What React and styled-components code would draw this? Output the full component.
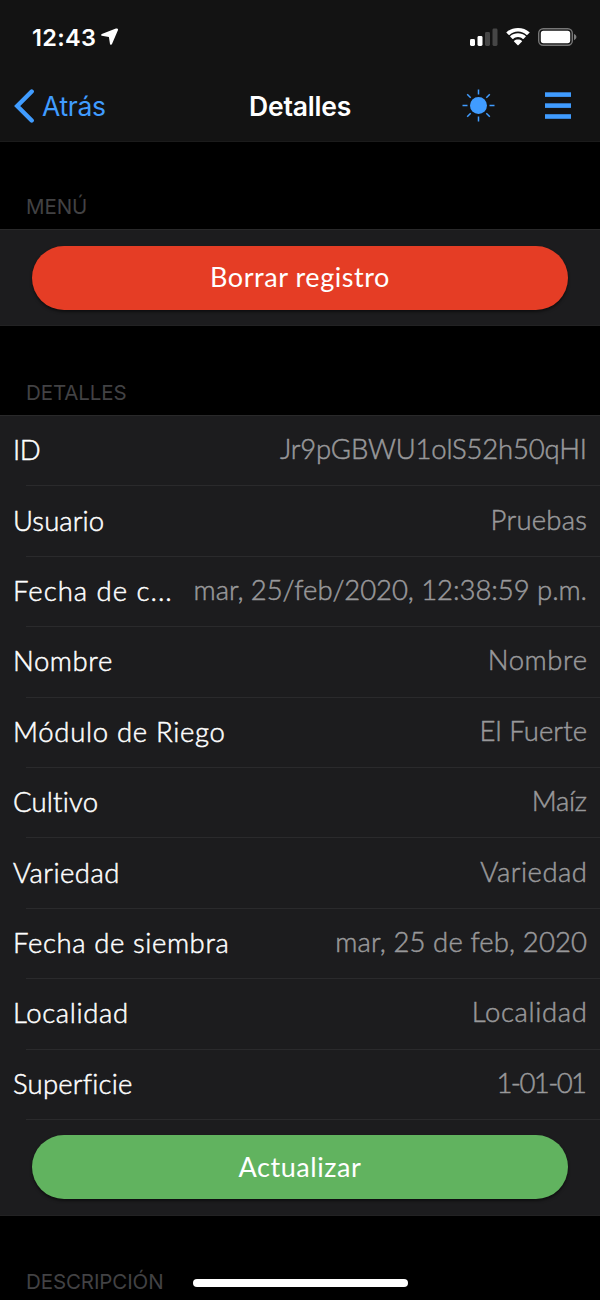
import React from 'react';
import styled, { createGlobalStyle } from 'styled-components';


const blue = '#409cff';
const sfFont = 'Inter, "Liberation Sans", sans-serif';

const GlobalStyle = createGlobalStyle`
    * {
        box-sizing: border-box;
    }
    body {
        margin: 0;
        background: #000;
        font-family: Lato, "Open Sans", sans-serif;
    }
`;

const Screen = styled.div`
    position: relative;
    width: 600px;
    height: 1300px;
    overflow: hidden;
    background: #000;
`;

const Header = styled.header`
    height: 142px;
    background: #131313;
    border-bottom: 1px solid #1b1b1b;
    font-family: ${sfFont};
`;

const StatusBar = styled.div`
    display: flex;
    align-items: center;
    justify-content: space-between;
    height: 74px;
    padding: 0 23px 0 32px;
    color: #fff;
`;

const Clock = styled.div`
    display: flex;
    align-items: center;
    gap: 5px;
    font-size: 23.5px;
    font-weight: 600;
    letter-spacing: 0.3px;
`;

const StatusIcons = styled.div`
    display: flex;
    align-items: center;
    gap: 8px;
    svg {
        display: block;
    }
`;

const NavBar = styled.nav`
    display: grid;
    grid-template-columns: 200px 200px 200px;
    align-items: center;
    height: 64px;
`;

const BackButton = styled.button`
    display: flex;
    align-items: center;
    gap: 7px;
    padding: 0 0 0 14px;
    border: 0;
    background: none;
    color: ${blue};
    font: 400 26.5px ${sfFont};
    letter-spacing: -0.3px;
`;

const Title = styled.h1`
    margin: 0;
    color: #fff;
    font-size: 26.5px;
    font-weight: 600;
    text-align: center;
    letter-spacing: -0.2px;
`;

const NavActions = styled.div`
    display: flex;
    align-items: center;
    justify-content: flex-end;
    gap: 50px;
    padding: 0 28px 2px 0;
    color: ${blue};
    svg {
        display: block;
    }
`;

const SectionTitle = styled.h2`
    display: flex;
    align-items: flex-end;
    height: ${props => props.$height}px;
    margin: 0;
    padding: 0 26px 10px;
    color: #424244;
    font-family: ${sfFont};
    font-size: 20.5px;
    font-weight: 400;
    line-height: 25px;
    letter-spacing: -0.1px;
`;

const Panel = styled.section`
    background: #1c1c1e;
    border-top: 1px solid #29292a;
    border-bottom: 1px solid #222223;
`;

const ButtonRow = styled.div`
    height: 95px;
    padding: 15.5px 32px 0;
`;

const PillButton = styled.button`
    display: block;
    width: 100%;
    height: 64px;
    padding: 0 0 2px;
    border: 0;
    border-radius: 32px;
    background: ${props => props.$color};
    box-shadow: 0 2px 3px rgba(0, 0, 0, 0.5);
    color: #fff;
    font: 400 27px Lato, sans-serif;
    letter-spacing: 0.55px;
`;

const Row = styled.div`
    display: flex;
    align-items: center;
    justify-content: space-between;
    height: 70.4px;
    padding: 0 13px 3px;
    background: linear-gradient(#2a2a2c, #2a2a2c) 26px 100% / 100% 1px no-repeat;
    font-size: 27.5px;
    font-weight: 300;
    white-space: nowrap;
    -webkit-text-stroke: 0.5px currentColor;
`;

const Label = styled.span`
    color: #fff;
    letter-spacing: ${props => props.$tracking}px;
`;

const Value = styled.span`
    margin-right: ${props => -props.$tracking}px;
    padding-bottom: 2px;
    color: #98989a;
    letter-spacing: ${props => props.$tracking}px;
`;

const HomeIndicator = styled.div`
    position: absolute;
    left: 193px;
    bottom: 13px;
    width: 215px;
    height: 8.5px;
    border-radius: 5px;
    background: #fff;
`;


// tracking: letter spacing of the label and of the value
const rows = [
    { label: 'ID', value: 'Jr9pGBWU1olS52h50qHI', tracking: [-0.3, -0.2] },
    { label: 'Usuario', value: 'Pruebas', tracking: [0.1, 0.25] },
    { label: 'Fecha de c...', value: 'mar, 25/feb/2020, 12:38:59 p.m.', tracking: [1, -0.06] },
    { label: 'Nombre', value: 'Nombre', tracking: [0.6, 0.6] },
    { label: 'Módulo de Riego', value: 'El Fuerte', tracking: [0.7, 0.1] },
    { label: 'Cultivo', value: 'Maíz', tracking: [0.2, -0.3] },
    { label: 'Variedad', value: 'Variedad', tracking: [0.45, 0.5] },
    { label: 'Fecha de siembra', value: 'mar, 25 de feb, 2020', tracking: [0.6, 0.12] },
    { label: 'Localidad', value: 'Localidad', tracking: [0.65, 0.65] },
    { label: 'Superficie', value: '1-01-01', tracking: [0.2, -1.6] },
];

const LocationArrow = () => (
    <svg width="18" height="18" viewBox="0 0 18 18" fill="currentColor">
        <path d="M14.9.6.8 6c-.9.4-.9 1.6 0 1.8L7.9 9l1.100 6.900c.2 1 1.600 1.200 2 .2L17 1.900c.3-.9-.9-1.700-2.100-1.300z" />
    </svg>
);

const Signal = () => (
    <svg width="28" height="18" viewBox="0 0 28 18" fill="currentColor">
        <rect x="0" y="11" width="5" height="7" rx="1.4" />
        <rect x="7.5" y="8" width="5" height="10" rx="1.4" />
        <rect x="15" y="4" width="5" height="14" rx="1.4" opacity=".22" />
        <rect x="22.5" y="0.5" width="5" height="17.5" rx="1.4" opacity=".22" />
    </svg>
);

const Wifi = () => (
    <svg width="24" height="18" viewBox="0 0 24 18" fill="currentColor">
        <path d="M12 3.6c3.3 0 6.3 1.3 8.6 3.4.2.2.4.2.6 0l2.3-2.2c.2-.2.2-.5 0-.6C20.5 1.5 16.4 0 12 0S3.500 1.500.5 4.200c-.2.100-.2.400 0 .6L2.800 7c.2.200.4.200.6 0C5.700 4.900 8.700 3.600 12 3.600z" />
        <path d="M12 9.1c1.8 0 3.5.7 4.8 1.8.2.2.4.2.6 0l2.3-2.2c.2-.2.2-.5 0-.7C17.6 6.2 14.9 5.2 12 5.2S6.4 6.200 4.300 8c-.2.200-.2.500 0 .7l2.300 2.200c.2.200.4.200.6 0C8.500 9.800 10.200 9.100 12 9.100z" />
        <path d="M16 13.500c.2-.2.2-.5 0-.6-1.100-.9-2.500-1.400-4-1.400s-2.900.5-4 1.400c-.2.100-.2.400 0 .6l3.700 3.800c.2.200.4.200.6 0z" />
    </svg>
);

const Battery = () => (
    <svg width="39" height="18" viewBox="0 0 39 18" fill="currentColor">
        <rect x=".7" y=".7" width="33.6" height="16.6" rx="4.5" fill="none" stroke="currentColor" strokeWidth="1.4" opacity=".42" />
        <rect x="2.8" y="2.8" width="29.4" height="12.4" rx="2.6" />
        <path d="M36 6v6.200c1.500-.6 2.400-1.700 2.400-3.100S37.500 6.600 36 6z" opacity=".45" />
    </svg>
);

const Chevron = () => (
    <svg width="21" height="34" viewBox="0 0 21 34" fill="none" stroke="currentColor" strokeWidth="4.4" strokeLinecap="round">
        <path d="M17.700 2.500 3.200 17l14.500 14.500" />
    </svg>
);

const Sun = () => (
    <svg width="33" height="33" viewBox="0 0 33 33">
        <circle cx="16.5" cy="16.5" r="8.5" fill="currentColor" />
        <path
            d="M16.500 0.500v5M16.500 27.500v5M.5 16.500h5M27.500 16.500h5M5.200 5.200l3.500 3.500M24.300 24.300l3.500 3.500M27.800 5.200l-3.500 3.500M8.700 24.300l-3.500 3.500"
            stroke="currentColor"
            strokeWidth="1.5"
        />
    </svg>
);

const MenuLines = () => (
    <svg width="27" height="27" viewBox="0 0 27 27" fill="currentColor">
        <rect y=".3" width="26" height="4.6" />
        <rect y="11.3" width="26" height="4.6" />
        <rect y="22.2" width="26" height="4.6" />
    </svg>
);


const App = () => {
    return (
        <>
            <GlobalStyle />
            <Screen>
                <Header>
                    <StatusBar>
                        <Clock>12:43 <LocationArrow /></Clock>
                        <StatusIcons>
                            <Signal />
                            <Wifi />
                            <Battery />
                        </StatusIcons>
                    </StatusBar>
                    <NavBar>
                        <BackButton><Chevron />Atrás</BackButton>
                        <Title>Detalles</Title>
                        <NavActions>
                            <Sun />
                            <MenuLines />
                        </NavActions>
                    </NavBar>
                </Header>

                <SectionTitle $height={87}>MENÚ</SectionTitle>
                <Panel>
                    <ButtonRow>
                        <PillButton $color="#e53d25">Borrar registro</PillButton>
                    </ButtonRow>
                </Panel>

                <SectionTitle $height={89}>DETALLES</SectionTitle>
                <Panel>
                    {rows.map(({ label, value, tracking }) => (
                        <Row key={label}>
                            <Label $tracking={tracking[0]}>{label}</Label>
                            <Value $tracking={tracking[1]}>{value}</Value>
                        </Row>
                    ))}
                    <ButtonRow>
                        <PillButton $color="#61b35f">Actualizar</PillButton>
                    </ButtonRow>
                </Panel>

                <SectionTitle $height={88}>DESCRIPCIÓN</SectionTitle>
                <HomeIndicator />
            </Screen>
        </>
    );
};

export default App;
